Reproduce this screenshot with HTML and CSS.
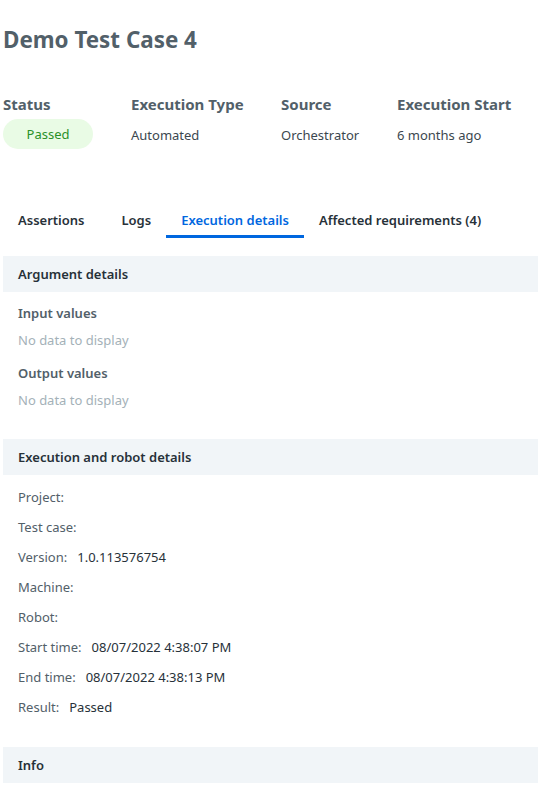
FILE: index.html
```html
<!DOCTYPE html>
<html lang="en">
<head>
<meta charset="utf-8">
<title>Demo Test Case 4</title>
<link rel="stylesheet" href="styles.css">
</head>
<body>
<div class="page">
  <h1 class="title">Demo Test Case 4</h1>

  <div class="summary">
    <div class="col">
      <div class="col-label">Status</div>
      <div class="col-value"><span class="pill">Passed</span></div>
    </div>
    <div class="col">
      <div class="col-label">Execution Type</div>
      <div class="col-value">Automated</div>
    </div>
    <div class="col">
      <div class="col-label">Source</div>
      <div class="col-value">Orchestrator</div>
    </div>
    <div class="col">
      <div class="col-label">Execution Start</div>
      <div class="col-value">6 months ago</div>
    </div>
  </div>

  <div class="tabs">
    <div class="tab">Assertions</div>
    <div class="tab">Logs</div>
    <div class="tab active">Execution details</div>
    <div class="tab">Affected requirements (4)</div>
  </div>

  <section class="panel">
    <div class="panel-head">Argument details</div>
    <div class="panel-body args">
      <div class="sub">Input values</div>
      <div class="empty">No data to display</div>
      <div class="sub sub-next">Output values</div>
      <div class="empty">No data to display</div>
    </div>
  </section>

  <section class="panel">
    <div class="panel-head">Execution and robot details</div>
    <div class="panel-body rows">
      <div class="row"><span class="k">Project:</span></div>
      <div class="row"><span class="k">Test case:</span></div>
      <div class="row"><span class="k">Version:</span><span class="v">1.0.113576754</span></div>
      <div class="row"><span class="k">Machine:</span></div>
      <div class="row"><span class="k">Robot:</span></div>
      <div class="row"><span class="k">Start time:</span><span class="v">08/07/2022 4:38:07 PM</span></div>
      <div class="row"><span class="k">End time:</span><span class="v">08/07/2022 4:38:13 PM</span></div>
      <div class="row"><span class="k">Result:</span><span class="v">Passed</span></div>
    </div>
  </section>

  <section class="panel">
    <div class="panel-head">Info</div>
  </section>
</div>
</body>
</html>
```

FILE: styles.css
```css
* { box-sizing: border-box; }

html, body {
  margin: 0;
  padding: 0;
  background: #ffffff;
}

body {
  font-family: "Noto Sans", "Open Sans", "DejaVu Sans", sans-serif;
  color: #273139;
  font-size: 13px;
}

.page {
  padding-left: 3px;
  overflow: hidden;
}

.title {
  margin: 25px 0 0 0;
  font-size: 22.4px;
  line-height: 30px;
  font-weight: 700;
  color: #526069;
}

.summary {
  display: grid;
  grid-template-columns: 128px 150px 116px auto;
  margin-top: 39px;
}

.col-label {
  font-size: 15px;
  font-weight: 700;
  line-height: 20px;
  color: #526069;
}

.col-value {
  margin-top: 5px;
  height: 30px;
  line-height: 32px;
  font-size: 13px;
  color: #3b474f;
}

.pill {
  display: inline-block;
  vertical-align: top;
  width: 90px;
  height: 30px;
  line-height: 30px;
  border-radius: 15px;
  background: #e9fbe5;
  color: #2b9129;
  text-align: center;
}

.tabs {
  display: flex;
  margin-top: 51px;
}

.tab {
  padding: 10px 15px 5px;
  line-height: 20px;
  font-size: 13px;
  font-weight: 600;
  color: #273139;
  border-bottom: 3px solid transparent;
}

.tab:nth-child(2) { margin-left: 7px; }

.tab.active {
  color: #0067df;
  border-bottom-color: #0067df;
}

.panel { margin-top: 18px; }

.panel + .panel { margin-top: 29px; }
.panel:last-child { margin-top: 25px; }

.panel-head {
  background: #f1f5f8;
  height: 36px;
  line-height: 36px;
  padding-left: 15px;
  font-size: 13px;
  font-weight: 600;
  color: #273139;
}

.panel-body { padding-left: 15px; }

.args { padding-top: 11px; }

.sub {
  line-height: 20px;
  font-weight: 600;
  color: #526069;
}

.sub-next { margin-top: 13px; }

.empty {
  margin-top: 7px;
  line-height: 20px;
  color: #a4b1b8;
}

.rows { padding-top: 7px; }

.row {
  display: flex;
  gap: 10px;
  height: 30px;
  line-height: 30px;
}

.k { color: #526069; }
.v { color: #273139; }
```
